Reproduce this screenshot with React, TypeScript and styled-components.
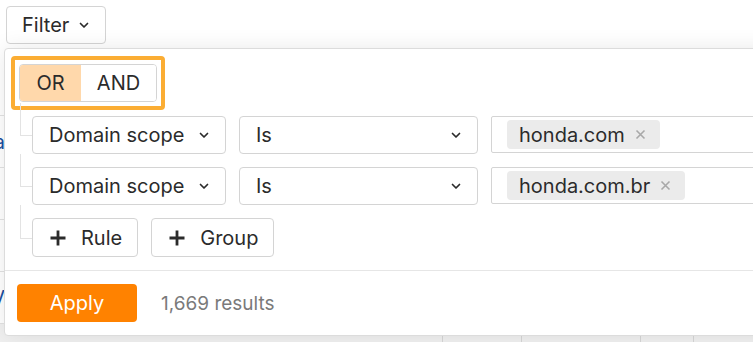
import React from "react";
import styled, { createGlobalStyle } from "styled-components";

const GlobalStyle = createGlobalStyle`
  body {
    margin: 0;
    font-family: Inter, "Noto Sans", sans-serif;
    color: #2b2b2b;
    background: #fff;
  }
`;

const Page = styled.div`
  position: relative;
  width: 753px;
  height: 342px;
  overflow: hidden;
  background: #fff;
`;

const Toolbar = styled.div`
  display: flex;
  padding: 6px 0 0 6px;
  height: 38px;
`;

const FilterButton = styled.button`
  display: flex;
  align-items: center;
  gap: 10px;
  width: 100px;
  height: 38px;
  padding: 0 0 0 15px;
  border: 1px solid #d4d4d4;
  border-radius: 4px;
  background: #fff;
  font-family: inherit;
  font-size: 20px;
  color: #2b2b2b;
`;

const Table = styled.div`
  display: flex;
  flex-direction: column;
  margin-top: 20px;
`;

const TableRow = styled.div<{ $shade?: boolean }>`
  display: flex;
  height: 51px;
  border-bottom: 1px solid #e2e2e2;
  background: ${(p) => (p.$shade ? "#f0f0f0" : "#fff")};
`;

const LinkCell = styled.div`
  display: flex;
  justify-content: flex-end;
  align-items: center;
  width: 5px;
  overflow: hidden;
  white-space: nowrap;
  font-size: 20px;
  color: #1a4fa0;
`;

const DataCell = styled.div<{ $w: number; $first?: boolean }>`
  width: ${(p) => p.$w}px;
  border-left: ${(p) => (p.$first ? "none" : "1px solid #d6d6d6")};
  font-size: 16px;
  color: #777;
  padding: 14px 0 0 20px;
  box-sizing: border-box;
`;

const Popover = styled.div`
  position: absolute;
  left: 4px;
  top: 48px;
  width: 840px;
  height: 288px;
  box-sizing: border-box;
  display: flex;
  flex-direction: column;
  background: #fff;
  border: 1px solid #dcdcdc;
  border-radius: 4px;
  box-shadow: 0 0 22px rgba(0, 0, 0, 0.09);
`;

const Body = styled.div`
  display: flex;
  flex-direction: column;
  align-items: flex-start;
  padding: 7px 0 0 6px;
  height: 222px;
  box-sizing: border-box;
  border-bottom: 1px solid #e6e6e6;
`;

const Highlight = styled.div`
  padding: 4px;
  border: 4px solid #fbad33;
  border-radius: 4px;
`;

const Segmented = styled.div`
  display: flex;
  height: 38px;
  border: 1px solid #d4d4d4;
  border-radius: 4px;
  overflow: hidden;
  box-sizing: border-box;
`;

const Segment = styled.button<{ $active?: boolean; $w: number }>`
  width: ${(p) => p.$w}px;
  border: none;
  background: ${(p) => (p.$active ? "#ffd8ab" : "#fff")};
  font-family: inherit;
  font-size: 20px;
  color: #2b2b2b;
  padding: 0;
`;

const Tree = styled.div`
  display: flex;
  flex-direction: column;
  gap: 13px;
  margin: 6px 0 0 9px;
  padding-left: 12px;
`;

const Branch = styled.div`
  position: relative;
  display: flex;
  gap: 13px;

  &::before {
    content: "";
    position: absolute;
    left: -12px;
    top: -13px;
    width: 11px;
    height: calc(50% + 13px);
    border-left: 1px solid #e3e3e3;
    border-bottom: 1px solid #e3e3e3;
  }
`;

const Select = styled.div<{ $w: number }>`
  display: flex;
  align-items: center;
  justify-content: space-between;
  width: ${(p) => p.$w}px;
  height: 38px;
  box-sizing: border-box;
  padding: 0 16px 0 16px;
  border: 1px solid #d4d4d4;
  border-radius: 4px;
  font-size: 20px;
`;

const ValueInput = styled.div`
  display: flex;
  align-items: center;
  width: 330px;
  height: 37px;
  box-sizing: border-box;
  padding-left: 15px;
  border: 1px solid #d4d4d4;
  border-radius: 2px;
`;

const Chip = styled.span`
  display: inline-flex;
  align-items: center;
  gap: 10px;
  height: 29px;
  padding: 0 14px 0 12px;
  background: #ebebeb;
  border-radius: 4px;
  font-size: 20px;
`;

const AddButton = styled.button`
  display: flex;
  align-items: center;
  gap: 14px;
  height: 39px;
  padding: 0 15px 0 16px;
  border: 1px solid #d4d4d4;
  border-radius: 4px;
  background: #fff;
  font-family: inherit;
  font-size: 20px;
  color: #2b2b2b;
`;

const Footer = styled.div`
  display: flex;
  align-items: center;
  gap: 24px;
  padding: 0 12px;
  flex: 1;
`;

const ApplyButton = styled.button`
  width: 120px;
  height: 38px;
  border: none;
  border-radius: 4px;
  background: #ff8200;
  color: #fff;
  font-family: inherit;
  font-size: 20px;
`;

const Results = styled.span`
  font-size: 19px;
  color: #7a7a7a;
`;

const Chevron = () => (
  <svg width="10" height="7" viewBox="0 0 10 7" fill="none">
    <path d="M1.5 1.5L5 5l3.5-3.5" stroke="#2b2b2b" strokeWidth="1.7" strokeLinecap="round" strokeLinejoin="round" />
  </svg>
);

const Plus = () => (
  <svg width="18" height="18" viewBox="0 0 18 18">
    <path d="M9 1.5v15M1.5 9h15" stroke="#2b2b2b" strokeWidth="2.8" />
  </svg>
);

const Cross = () => (
  <svg width="11" height="11" viewBox="0 0 11 11">
    <path d="M1.5 1.5l8 8M9.5 1.5l-8 8" stroke="#a8a8a8" strokeWidth="1.6" />
  </svg>
);

const rules = ["honda.com", "honda.com.br"];

export default function App() {
  return (
    <Page>
      <GlobalStyle />
      <Toolbar>
        <FilterButton>
          Filter <Chevron />
        </FilterButton>
      </Toolbar>
      <Table>
        {[0, 1, 2, 3, 4].map((i) => (
          <TableRow key={i}>
            <LinkCell>{i === 1 ? "honda.com/a" : i === 4 ? "honda.com.br/V" : ""}</LinkCell>
          </TableRow>
        ))}
        <TableRow $shade>
          <DataCell $w={446} $first />
          <DataCell $w={79}>171</DataCell>
          <DataCell $w={120}>3,4,011</DataCell>
          <DataCell $w={54} />
          <DataCell $w={60}>213</DataCell>
        </TableRow>
      </Table>
      <Popover>
        <Body>
          <Highlight>
            <Segmented>
              <Segment $active $w={61}>OR</Segment>
              <Segment $w={75}>AND</Segment>
            </Segmented>
          </Highlight>
          <Tree>
            {rules.map((r) => (
              <Branch key={r}>
                <Select $w={194}>
                  Domain scope <Chevron />
                </Select>
                <Select $w={239}>
                  Is <Chevron />
                </Select>
                <ValueInput>
                  <Chip>
                    {r} <Cross />
                  </Chip>
                </ValueInput>
              </Branch>
            ))}
            <Branch>
              <AddButton>
                <Plus /> Rule
              </AddButton>
              <AddButton>
                <Plus /> Group
              </AddButton>
            </Branch>
          </Tree>
        </Body>
        <Footer>
          <ApplyButton>Apply</ApplyButton>
          <Results>1,669 results</Results>
        </Footer>
      </Popover>
    </Page>
  );
}
